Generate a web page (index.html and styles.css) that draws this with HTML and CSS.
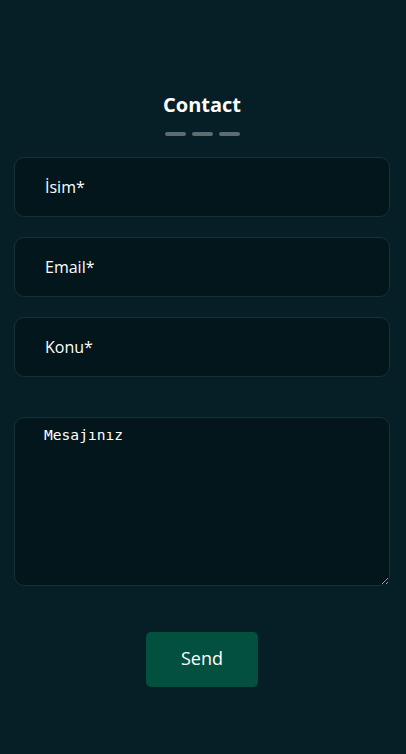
FILE: index.html
```html
<!DOCTYPE html>
<html lang="tr">
<head>
<meta charset="utf-8">
<title>Contact</title>
<link rel="stylesheet" href="styles.css">
</head>
<body>
<section class="contact">
  <h2 class="title">Contact</h2>
  <div class="dashes"><span></span><span></span><span></span></div>
  <form class="form">
    <input class="field" type="text" placeholder="İsim*">
    <input class="field" type="email" placeholder="Email*">
    <input class="field" type="text" placeholder="Konu*">
    <textarea class="message" placeholder="Mesajınız"></textarea>
    <div class="actions"><button class="send" type="button">Send</button></div>
  </form>
</section>
</body>
</html>
```
FILE: styles.css
```css
html, body {
  margin: 0;
  padding: 0;
  background: #061e25;
  height: 100%;
}
body {
  font-family: "Open Sans", "Noto Sans", sans-serif;
  color: #fff;
}
.contact {
  max-width: 404px;
  padding-top: 90px;
}
.title {
  margin: 0;
  text-align: center;
  font-size: 20px;
  line-height: 30px;
  font-weight: 700;
  color: #fff;
}
.dashes {
  display: flex;
  justify-content: center;
  gap: 6px;
  margin-top: 12px;
}
.dashes span {
  width: 21px;
  height: 4px;
  border-radius: 2px;
  background: #5d6c70;
}
.form {
  display: flex;
  flex-direction: column;
  padding: 21px 14px 0;
}
.field {
  box-sizing: border-box;
  height: 60px;
  margin-bottom: 20px;
  padding: 0 29px 0 30px;
  background: #02161b;
  border: 1px solid #17313a;
  border-radius: 10px;
  font-family: "Open Sans", "Noto Sans", sans-serif;
  font-size: 16px;
  font-weight: 500;
  color: #fff;
  outline: none;
}
.field::placeholder {
  color: #fff;
  opacity: 1;
}
.message {
  box-sizing: border-box;
  height: 169px;
  margin-top: 20px;
  padding: 8px 29px;
  background: #02161b;
  border: 1px solid #17313a;
  border-radius: 10px;
  font-family: "DejaVu Sans Mono", monospace;
  font-size: 14.6px;
  color: #fff;
  resize: vertical;
  outline: none;
}
.message::placeholder {
  color: #fff;
  opacity: 1;
}
.actions {
  display: flex;
  justify-content: center;
  margin-top: 46px;
}
.send {
  width: 112px;
  height: 55px;
  padding: 0 0 3px;
  border: none;
  border-radius: 5px;
  background: #03503f;
  color: #fff;
  font-family: "Open Sans", "Noto Sans", sans-serif;
  font-size: 18px;
  font-weight: 500;
  cursor: pointer;
}
```
